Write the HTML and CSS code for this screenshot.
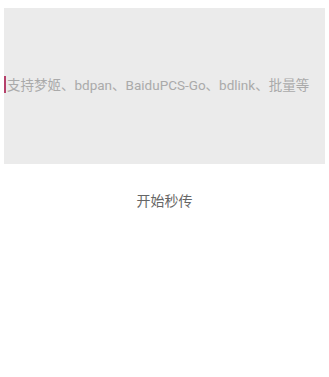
FILE: index.html
```html
<!DOCTYPE html>
<html lang="zh-CN">
<head>
  <meta charset="UTF-8">
  <meta name="viewport" content="width=device-width, initial-scale=1.0">
  <title>秒传</title>
  <link rel="stylesheet" href="styles.css">
</head>
<body>
  <div class="rapid-panel">
    <div class="input-area">
      <span class="caret"></span>
      <span class="placeholder">支持梦姬、bdpan、BaiduPCS-Go、bdlink、批量等</span>
    </div>
    <button type="button" class="start-btn">开始秒传</button>
  </div>
</body>
</html>
```

FILE: styles.css
```css
/* Reset default styles */
* {
  margin: 0;
  padding: 0;
  box-sizing: border-box;
}

body {
  font-family: Roboto, "Noto Sans CJK SC", sans-serif;
  background: #fff;
}

.rapid-panel {
  padding: 8px 4px;
}

/* Input area */
.input-area {
  display: flex;
  align-items: center;
  height: 156px;
  padding-bottom: 4px;
  background: #ebebeb;
}

.caret {
  width: 2px;
  height: 17px;
  margin-right: 1px;
  background: #b5416b;
}

.placeholder {
  font-size: 13.5px;
  color: #aaa;
  white-space: nowrap;
}

/* Start button */
.start-btn {
  display: block;
  margin: 20px auto 0;
  padding: 6px 12px;
  font-family: inherit;
  font-size: 14px;
  color: #666;
  background: transparent;
  border: none;
  cursor: pointer;
}
```
